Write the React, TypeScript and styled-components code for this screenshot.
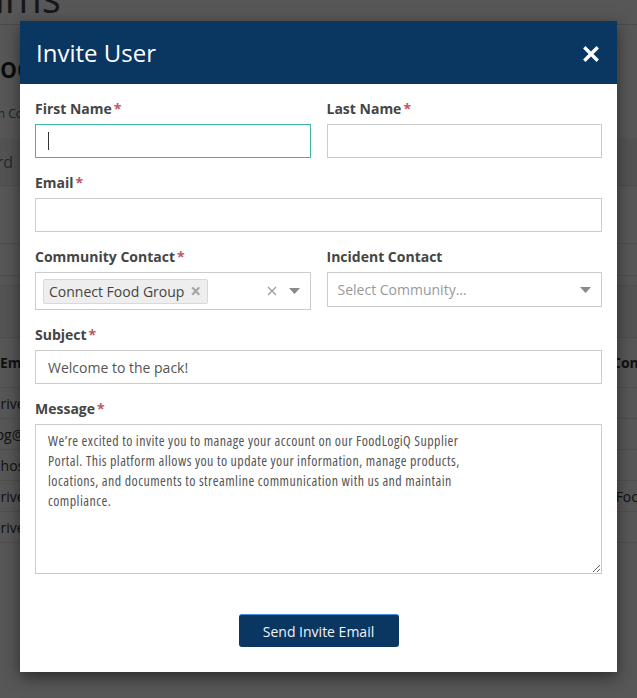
import React from "react";
import styled, { createGlobalStyle } from "styled-components";

const Global = createGlobalStyle`
  html, body { margin: 0; padding: 0; }
  body {
    width: 637px;
    height: 698px;
    overflow: hidden;
    font-family: "Open Sans", "Liberation Sans", sans-serif;
    background: #fff;
  }
  * { box-sizing: border-box; }
`;

/* ---------- background page ---------- */
const Page = styled.div`
  position: relative;
  width: 637px;
  height: 698px;
  overflow: hidden;
  color: #333;
`;

const PageInner = styled.div`
  margin-left: -24px;
  width: 700px;
`;

const TopBar = styled.div`
  height: 25px;
  overflow: hidden;
  border-bottom: 1px solid #ddd;
`;

const TopTitle = styled.div`
  font-size: 40px;
  line-height: 40px;
  margin-top: -22px;
  margin-left: -38px;
  color: #444;
`;

const PageHeading = styled.div`
  font-size: 28px;
  margin-top: 26px;
  margin-left: -8px;
  line-height: 32px;
  font-weight: 600;
  color: #222;
`;

const PageSub = styled.div`
  font-size: 12px;
  margin-top: 22px;
  margin-left: 7px;
  color: #666;
`;

const Band = styled.div<{ $h: number; $bg: string }>`
  height: ${(p) => p.$h}px;
  background: ${(p) => p.$bg};
  border-bottom: 1px solid #e3e3e3;
  display: flex;
  align-items: center;
  font-size: 16px;
  color: #777;
`;

const TableRow = styled.div<{ $head?: boolean }>`
  height: ${(p) => (p.$head ? 50 : 31)}px;
  display: flex;
  align-items: center;
  justify-content: space-between;
  border-bottom: 1px solid #e6e6e6;
  font-size: 14px;
  font-weight: ${(p) => (p.$head ? 700 : 400)};
  padding-left: ${(p) => (p.$head ? 24 : 16)}px;
  padding-right: 0;
  color: #333;
`;

const RightCell = styled.span`
  width: 64px;
`;

const Overlay = styled.div`
  position: absolute;
  inset: 0;
  background: rgba(0, 0, 0, 0.66);
`;

/* ---------- modal ---------- */
const Modal = styled.div`
  position: absolute;
  left: 20px;
  top: 21px;
  width: 597px;
  background: #fff;
  box-shadow: 0 5px 15px rgba(0, 0, 0, 0.5);
`;

const Header = styled.div`
  height: 63px;
  background: #0a3662;
  display: flex;
  align-items: center;
  justify-content: space-between;
  padding: 0 18px 0 16px;
`;

const Title = styled.h2`
  margin: 0;
  font-size: 24px;
  font-weight: 400;
  color: #fff;
`;

const CloseButton = styled.button`
  border: 0;
  background: transparent;
  padding: 0;
  width: 16px;
  height: 16px;
  display: flex;
  cursor: pointer;
  margin-top: 2px;
`;

const Body = styled.div`
  padding: 15px 15px 0 15px;
`;

const Row = styled.div`
  display: grid;
  grid-template-columns: 1fr 1fr;
  column-gap: 16px;
`;

const Group = styled.div<{ $last?: boolean }>`
  margin-bottom: ${(p) => (p.$last ? 0 : 15)}px;
`;

const Label = styled.label`
  display: block;
  font-size: 14px;
  line-height: 20px;
  font-weight: 700;
  color: #454545;
  margin-bottom: 5px;
`;

const Req = styled.span`
  color: #c25561;
  margin-left: 2px;
  font-weight: 700;
`;

const FieldWrap = styled.div`
  position: relative;
`;

const Input = styled.input<{ $focus?: boolean }>`
  display: block;
  width: 100%;
  height: 34px;
  border: 1px solid ${(p) => (p.$focus ? "#3db3aa" : "#cccccc")};
  border-radius: 0;
  padding: 0 12px;
  font-family: "Open Sans", "Liberation Sans", sans-serif;
  font-size: 14px;
  color: #555;
  outline: none;
  background: #fff;
`;

const Caret = styled.span`
  position: absolute;
  left: 13px;
  top: 8px;
  width: 1px;
  height: 18px;
  background: #333;
`;

const Select = styled.div<{ $h: number }>`
  height: ${(p) => p.$h}px;
  border: 1px solid #cccccc;
  display: flex;
  align-items: center;
  padding: 0 10px 0 7px;
  background: #fff;
`;

const SelectValues = styled.div`
  flex: 1;
  display: flex;
  align-items: center;
`;

const Chip = styled.span`
  display: inline-flex;
  align-items: center;
  height: 25px;
  padding: 0 6px 0 5px;
  background: #eeeeee;
  border: 1px solid #d9d9d9;
  border-radius: 2px;
  font-size: 14px;
  color: #444;
  gap: 6px;
`;

const ChipX = styled.span`
  font-size: 19px;
  font-weight: 700;
  color: #a5a5a5;
  line-height: 1;
`;

const Placeholder = styled.span`
  font-size: 14px;
  color: #999;
  padding-left: 3px;
`;

const Indicators = styled.div`
  display: flex;
  align-items: center;
  gap: 12px;
`;

const TextArea = styled.textarea`
  display: block;
  width: 100%;
  height: 150px;
  border: 1px solid #cccccc;
  border-radius: 0;
  padding: 6px 12px;
  font-family: "Open Sans", "Liberation Sans", sans-serif;
  font-stretch: 75%;
  letter-spacing: 0.45px;
  font-size: 14px;
  line-height: 20px;
  color: #555;
  resize: vertical;
  outline: none;
`;

const Footer = styled.div`
  display: flex;
  justify-content: center;
  padding: 40px 0 25px;
`;

const PrimaryButton = styled.button`
  width: 160px;
  height: 33px;
  background: #0a3662;
  border: 0;
  border-top: 1px solid #3f8fd6;
  border-radius: 3px;
  color: #f2f4f7;
  font-family: "Open Sans", "Liberation Sans", sans-serif;
  font-size: 14px;
  cursor: pointer;
`;

const Arrow = () => (
  <svg width="11" height="6" viewBox="0 0 11 6">
    <path d="M0 0 H11 L5.5 6 Z" fill="#8a8a8a" />
  </svg>
);

const Clear = () => (
  <svg width="10" height="10" viewBox="0 0 10 10">
    <path d="M1 1 L9 9 M9 1 L1 9" stroke="#999" strokeWidth="1.2" />
  </svg>
);

export default function App() {
  const message =
    "We\u2019re excited to invite you to manage your account on our FoodLogiQ Supplier\nPortal. This platform allows you to update your information, manage products,\nlocations, and documents to streamline communication with us and maintain\ncompliance.";
  return (
    <>
      <Global />
      <Page>
        <PageInner>
          <TopBar>
            <TopTitle>Teams</TopTitle>
          </TopBar>
          <PageHeading>Food</PageHeading>
          <PageSub>Run Community</PageSub>
          <div style={{ height: 16 }} />
          <Band $h={48} $bg="#f4f4f4">&nbsp;card</Band>
          <Band $h={58} $bg="#ffffff" />
          <Band $h={32} $bg="#ffffff" />
          <Band $h={10} $bg="#ffffff" />
          <Band $h={52} $bg="#f7f7f7" />
          <TableRow $head>
            <span>Email</span>
            <RightCell>Contact</RightCell>
          </TableRow>
          <TableRow>
            <span>driver@example.com</span>
            <RightCell />
          </TableRow>
          <TableRow>
            <span>jpg@example.com</span>
            <RightCell />
          </TableRow>
          <TableRow>
            <span>bhos@example.com</span>
            <RightCell />
          </TableRow>
          <TableRow>
            <span>driver2@example.com</span>
            <RightCell>&nbsp;Food</RightCell>
          </TableRow>
          <TableRow>
            <span>driver3@example.com</span>
            <RightCell />
          </TableRow>
        </PageInner>
        <Overlay />
        <Modal>
          <Header>
            <Title>Invite User</Title>
            <CloseButton aria-label="Close">
              <svg width="16" height="16" viewBox="0 0 16 16">
                <path d="M2.5 2.5 L13.5 13.5 M13.5 2.5 L2.5 13.5" stroke="#fff" strokeWidth="3.4" strokeLinecap="square" />
              </svg>
            </CloseButton>
          </Header>
          <Body>
            <Row>
              <Group>
                <Label>
                  First Name<Req>*</Req>
                </Label>
                <FieldWrap>
                  <Input $focus />
                  <Caret />
                </FieldWrap>
              </Group>
              <Group>
                <Label>
                  Last Name<Req>*</Req>
                </Label>
                <Input />
              </Group>
            </Row>
            <Group>
              <Label>
                Email<Req>*</Req>
              </Label>
              <Input />
            </Group>
            <Row>
              <Group>
                <Label>
                  Community Contact<Req>*</Req>
                </Label>
                <Select $h={38}>
                  <SelectValues>
                    <Chip>
                      Connect Food Group<ChipX>×</ChipX>
                    </Chip>
                  </SelectValues>
                  <Indicators>
                    <Clear />
                    <Arrow />
                  </Indicators>
                </Select>
              </Group>
              <Group>
                <Label>Incident Contact</Label>
                <Select $h={35}>
                  <SelectValues>
                    <Placeholder>Select Community...</Placeholder>
                  </SelectValues>
                  <Indicators>
                    <Arrow />
                  </Indicators>
                </Select>
              </Group>
            </Row>
            <Group>
              <Label>
                Subject<Req>*</Req>
              </Label>
              <Input defaultValue="Welcome to the pack!" />
            </Group>
            <Group $last>
              <Label>
                Message<Req>*</Req>
              </Label>
              <TextArea defaultValue={message} />
            </Group>
          </Body>
          <Footer>
            <PrimaryButton>Send Invite Email</PrimaryButton>
          </Footer>
        </Modal>
      </Page>
    </>
  );
}
